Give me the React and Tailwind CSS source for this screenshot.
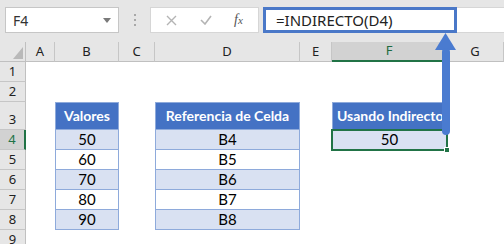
import React from 'react'

const cols = ['A', 'B', 'C', 'D', 'E', 'F', 'G']
const rows = [1, 2, 3, 4, 5, 6, 7, 8, 9]

const valores = [50, 60, 70, 80, 90]
const refs = ['B4', 'B5', 'B6', 'B7', 'B8']

const cellFont = { fontFamily: 'Lato, "Noto Sans", sans-serif' }
const uiFont = { fontFamily: '"Noto Sans", "Open Sans", sans-serif' }

const TableHeader = ({ children, className = '' }) => (
  <div
    className={`flex items-end justify-center pb-[4px] bg-[#4472c4] border border-[#8eaadb] text-white font-bold text-[14px] leading-[18px] whitespace-nowrap ${className}`}
    style={cellFont}
  >
    {children}
  </div>
)

const TableCell = ({ children, band, className = '' }) => (
  <div
    className={`flex items-end justify-center pb-[1px] border-x border-b border-[#8eaadb] text-[15px] leading-[18px] text-black ${band ? 'bg-[#d9e1f2]' : 'bg-white'} ${className}`}
    style={cellFont}
  >
    {children}
  </div>
)

const App = () => {
  return (
    <div className="relative w-[504px] h-[244px] overflow-hidden bg-white">
      {/* toolbar */}
      <div className="h-[42px] bg-[#e6e6e6] flex items-start pt-[7px] pl-[5px]">
        <div className="w-[114px] h-[26px] bg-white border border-[#c6c6c6] flex items-center justify-between pl-[7px] pr-[7px]">
          <span className="text-[14px] text-[#333]" style={uiFont}>F4</span>
          <svg width="8" height="5" viewBox="0 0 8 5"><path d="M0 0h8L4 5z" fill="#7a7a7a" /></svg>
        </div>
        <div className="w-[31px] h-[26px] flex flex-col items-center justify-center gap-[3px]">
          <span className="w-[2px] h-[2px] bg-[#a8a8a8]" />
          <span className="w-[2px] h-[2px] bg-[#a8a8a8]" />
          <span className="w-[2px] h-[2px] bg-[#a8a8a8]" />
        </div>
        <div className="w-[109px] h-[26px] bg-white border border-[#d6d6d6] flex items-center justify-around px-[4px]">
          <svg width="11" height="11" viewBox="0 0 11 11"><path d="M1 1l9 9M10 1l-9 9" stroke="#b4b4b4" strokeWidth="1.4" /></svg>
          <svg width="12" height="10" viewBox="0 0 12 10"><path d="M1 5l4 4 6-8" stroke="#b4b4b4" strokeWidth="1.6" fill="none" /></svg>
          <span className="text-[14px] italic text-[#555] leading-none" style={{ fontFamily: '"Liberation Serif", serif' }}>
            f<span className="text-[11px]">x</span>
          </span>
        </div>
        <div className="ml-[4px] flex-1 h-[26px] bg-white border-y border-[#d6d6d6] flex">
          <div className="w-[194px] h-[26px] -mt-px border-[3px] border-[#4a78c8] flex items-center pl-[10px]">
            <span className="text-[15px] text-[#222]" style={uiFont}>=INDIRECTO(D4)</span>
          </div>
        </div>
      </div>

      {/* sheet */}
      <div className="grid grid-cols-[26px_29px_64px_36px_145px_32px_115px_1fr] grid-rows-[20px_20px_20px_28px_20px_20px_20px_20px_20px_20px]">
        {/* corner */}
        <div className="bg-[#e6e6e6] border-r border-b border-[#c0c0c0] flex items-end justify-end pr-[2px] pb-[2px]">
          <svg width="10" height="12" viewBox="0 0 10 12"><path d="M10 0v12H0z" fill="#b9b9b9" /></svg>
        </div>
        {cols.map(c => (
          <div
            key={c}
            className={`flex items-center justify-center text-[13px] border-r ${c === 'F' ? 'bg-[#d2d2d2] text-[#1e6b3f] border-b-2 border-b-[#217346]' : 'bg-[#e6e6e6] text-[#222] border-b border-b-[#c0c0c0]'} border-r-[#c6c6c6]`}
            style={uiFont}
          >
            {c}
          </div>
        ))}

        {rows.map(r => (
          <React.Fragment key={r}>
            <div
              className={`flex items-center justify-center text-[13px] border-b border-b-[#c6c6c6] ${r === 4 ? 'bg-[#d2d2d2] text-[#217346] border-r-2 border-r-[#217346]' : 'bg-[#e6e6e6] text-[#222] border-r border-r-[#c0c0c0]'} ${r === 3 ? 'pt-[8px]' : ''}`}
              style={uiFont}
            >
              {r}
            </div>
            {/* A */}
            <div />
            {/* B */}
            {r === 3 ? (
              <TableHeader>Valores</TableHeader>
            ) : r >= 4 && r <= 8 ? (
              <TableCell band={r % 2 === 0}>{valores[r - 4]}</TableCell>
            ) : (
              <div />
            )}
            {/* C */}
            <div />
            {/* D */}
            {r === 3 ? (
              <TableHeader>Referencia de Celda</TableHeader>
            ) : r >= 4 && r <= 8 ? (
              <TableCell band={r % 2 === 0}>{refs[r - 4]}</TableCell>
            ) : (
              <div />
            )}
            {/* E */}
            <div />
            {/* F */}
            {r === 3 ? (
              <TableHeader className="justify-start pl-[4px]">Usando Indirecto</TableHeader>
            ) : r === 4 ? (
              <div className="relative -ml-px -mt-px -mb-px w-[117px] border-2 border-[#217346] bg-[#d9e1f2] flex items-end justify-center text-[15px] leading-[18px] text-black pb-[1px]" style={cellFont}>
                50
                <span className="absolute -right-[4px] -bottom-[4px] w-[6px] h-[6px] bg-[#217346] border border-white" />
              </div>
            ) : (
              <div />
            )}
            {/* G */}
            <div />
          </React.Fragment>
        ))}
      </div>

      {/* annotation arrow from F4 to formula bar */}
      <svg className="absolute left-[430px] top-[30px]" width="32" height="112" viewBox="0 0 32 112">
        <path d="M15.5 3L26 20H5z" fill="#4a7bd0" />
        <rect x="12" y="18" width="8" height="87" rx="4" fill="#4a7bd0" />
      </svg>
    </div>
  )
}

export default App
